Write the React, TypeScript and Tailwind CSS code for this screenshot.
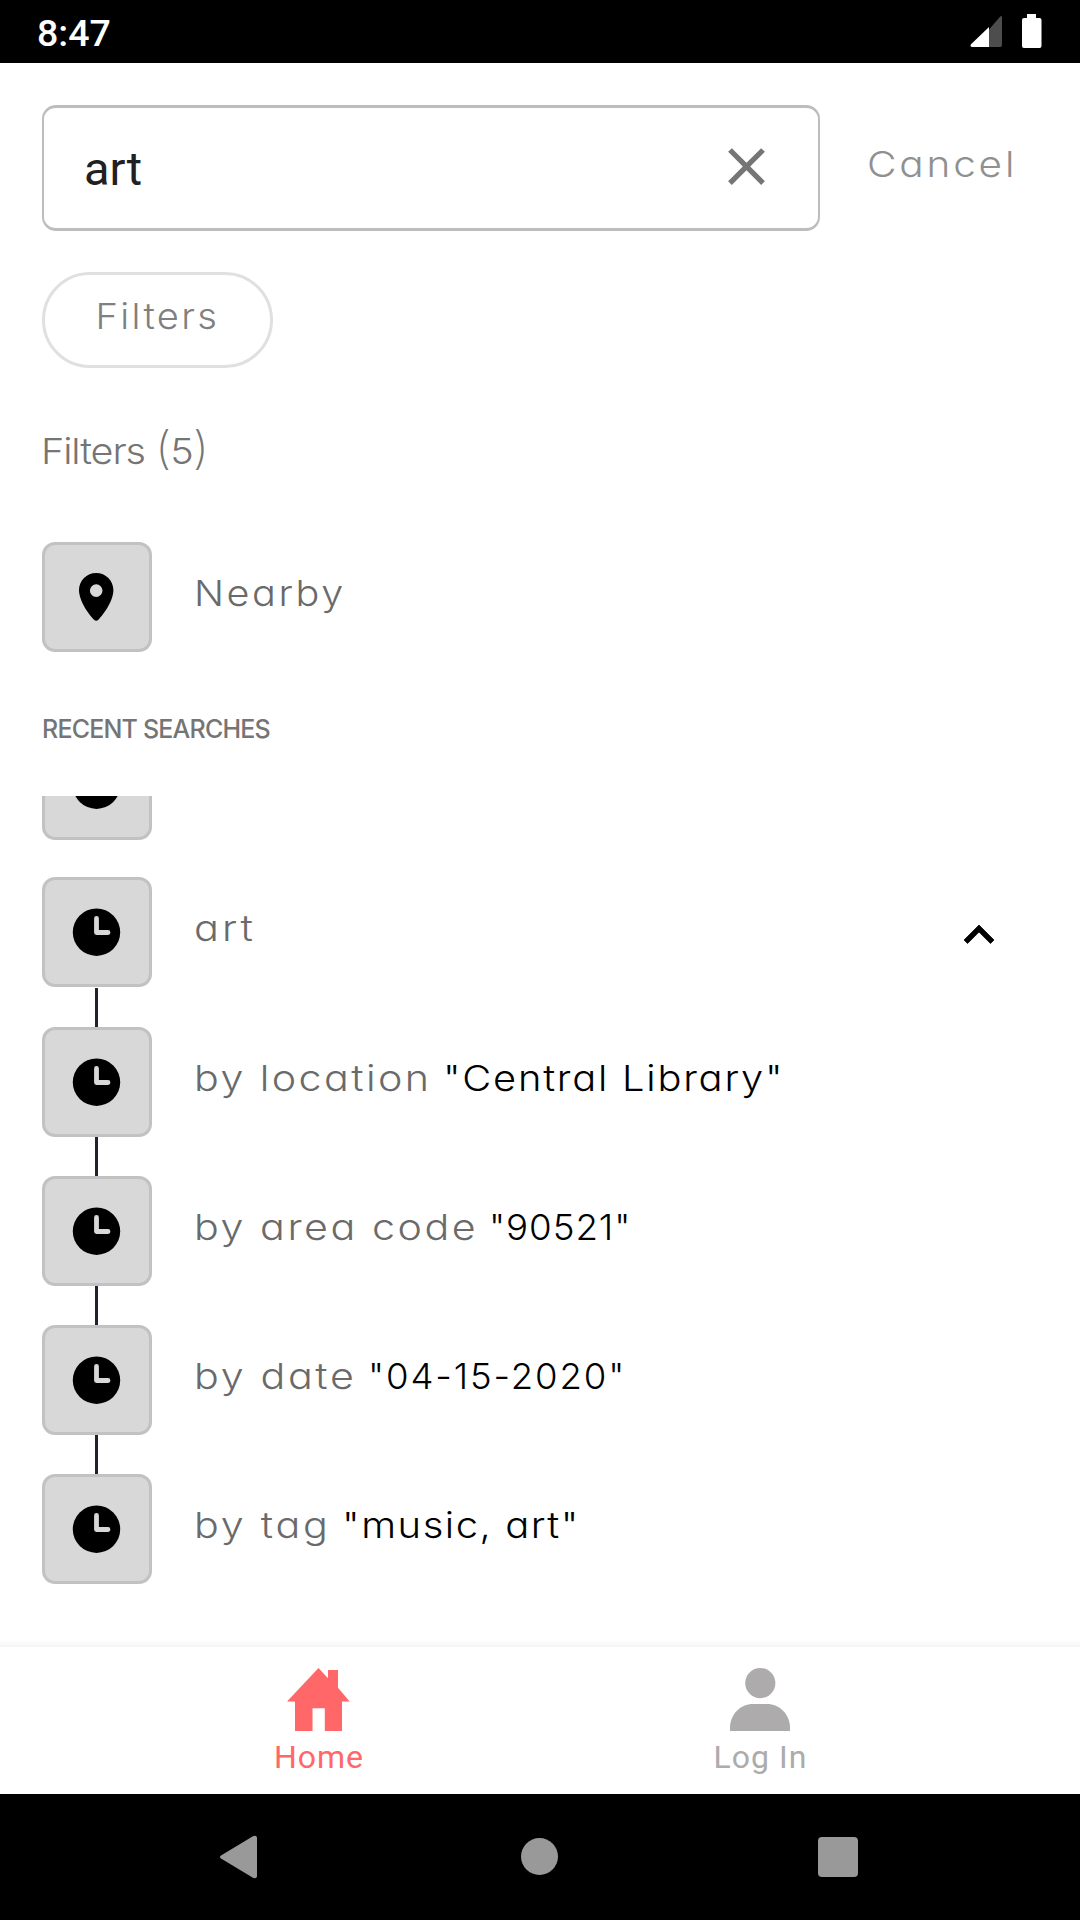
import React from "react";

const light = "inline-block font-['Inter','Lato',sans-serif] font-light [font-feature-settings:'cv11'] text-[36px] leading-[48px] whitespace-pre";

function ClockIcon() {
  return (
    <svg width="104" height="104" viewBox="0 0 104 104" className="block">
      <circle cx="51.5" cy="52.2" r="23.7" fill="#000" />
      <path d="M51.5 38.5V52.5H63" fill="none" stroke="#d8d8d8" strokeWidth="4.8" strokeLinecap="round" strokeLinejoin="round" />
    </svg>
  );
}

function PinIcon() {
  return (
    <svg width="104" height="104" viewBox="0 0 104 104" className="block">
      <path
        fillRule="evenodd"
        d="M51.2 28C41.6 28 34 35.6 34 45.1C34 56.5 44.5 70.2 49 74.8C50.3 76 52.1 76 53.4 74.8C57.9 70.2 68.4 56.5 68.4 45.1C68.4 35.6 60.8 28 51.2 28ZM51.2 39.3A6.3 6.3 0 1 1 51.2 51.9A6.3 6.3 0 1 1 51.2 39.3Z"
        fill="#000"
      />
    </svg>
  );
}

function Tile({ children }: { children: React.ReactNode }) {
  return <div className="size-[110px] shrink-0 rounded-[13px] border-3 border-[#c2c2c2] bg-[#d8d8d8]">{children}</div>;
}

function Connector({ first }: { first?: boolean }) {
  return (
    <div className={first ? "h-10 pt-px pl-[53px]" : "h-[39px] pl-[53px]"}>
      <div className="h-[39px] w-[3px] bg-[#20222c]" />
    </div>
  );
}

const details = [
  { label: "by location", value: '"Central Library"', labelStyle: "w-[249px] tracking-[2.1px]", valueStyle: "scale-x-[1.107] tracking-[1.6px]" },
  { label: "by area code", value: '"90521"', labelStyle: "w-[295px] tracking-[2.2px]", valueStyle: "scale-x-[1.02] tracking-[0.9px]" },
  { label: "by date", value: '"04-15-2020"', labelStyle: "w-[174px] tracking-[2.3px]", valueStyle: "scale-x-[1.015] tracking-[1.85px]" },
  { label: "by tag", value: '"music, art"', labelStyle: "w-[148px] tracking-[2.4px]", valueStyle: "scale-x-[1.11] tracking-[1.4px]" },
];

export default function App() {
  return (
    <div className="flex h-[1920px] w-[1080px] flex-col overflow-hidden bg-white">
      <header className="flex h-[63px] shrink-0 items-center justify-between bg-black pr-[38px] pl-[37px]">
        <span className="pt-[2px] font-['Roboto',sans-serif] text-[37.5px] leading-[44px] font-medium text-white">8:47</span>
        <svg width="72" height="36" viewBox="970 14 72 36">
          <path d="M989 47V29.5L1000 16.7Q1002 15 1002 18V45Q1002 47 1000 47Z" fill="#4d4d4d" />
          <path d="M989 47H972Q969.6 46.4 971 44.3L989 27Z" fill="#fff" />
          <path d="M1027 14H1036V18H1039.5Q1041.5 18 1041.5 20V46Q1041.5 48 1039.5 48H1024Q1022 48 1022 46V20Q1022 18 1024 18H1027Z" fill="#fff" />
        </svg>
      </header>

      <main className="flex min-h-0 flex-1 flex-col px-[42px] pt-[42px]">
        <div className="flex h-[126px] shrink-0 items-center">
          <div className="flex h-[126px] w-[778px] items-center justify-between rounded-[14px] border-x-2 border-y-3 border-[#bdbdbd] pr-[40px] pl-[40px]">
            <span className="pt-[2px] font-['Roboto',sans-serif] text-[47px] leading-[56px] text-[#212121]">art</span>
            <svg width="63" height="63" viewBox="0 0 24 24" fill="#757575" className="mb-[3px]">
              <path d="M19 6.41 17.59 5 12 10.59 6.41 5 5 6.41 10.59 12 5 17.59 6.41 19 12 13.41 17.59 19 19 17.59 13.41 12z" />
            </svg>
          </div>
          <span className={light + " ml-[47px] origin-left scale-x-[1.125] pb-2 tracking-[2.5px] text-[#909090]"}>Cancel</span>
        </div>

        <button className="mt-[41px] h-24 w-[231px] shrink-0 rounded-full border-3 border-[#e0e0e0] pb-2">
          <span className={light + " scale-x-[1.06] tracking-[2.2px] text-[#808080]"}>Filters</span>
        </button>

        <div className="mt-[57px] h-[50px] shrink-0 leading-none">
          <span className={light + " -ml-px origin-left scale-x-[1.1] tracking-[-1px] text-[#757575]"}>
            Filters <span className="text-[45px] leading-none font-extralight">(</span>5<span className="text-[45px] leading-none font-extralight">)</span>
          </span>
        </div>

        <div className="mt-[67px] flex shrink-0 items-center">
          <Tile>
            <PinIcon />
          </Tile>
          <span className={light + " ml-[42px] origin-left scale-x-[1.1] pb-2 tracking-[2.3px] text-[#6a6a6a]"}>Nearby</span>
        </div>

        <h2 className="mt-[59px] shrink-0 font-['Inter',sans-serif] text-[25px] leading-[36px] font-medium tracking-[-0.8px] text-[#757575]">RECENT SEARCHES</h2>

        <div className="mt-[49px] min-h-0 flex-1 overflow-hidden">
          <div className="-mt-[66px] mb-[37px]">
            <Tile>
              <ClockIcon />
            </Tile>
          </div>
          <div className="flex items-center">
            <Tile>
              <ClockIcon />
            </Tile>
            <span className={light + " ml-[42px] origin-left scale-x-[1.15] pb-2 tracking-[2.6px] text-[#6a6a6a]"}>art</span>
            <svg width="60" height="60" viewBox="0 0 24 24" className="mt-[6px] mr-[29px] ml-auto" fill="#000">
              <path d="m12 8-6 6 1.41 1.41L12 10.83l4.59 4.58L18 14z" stroke="#000" strokeWidth="0.3" />
            </svg>
          </div>
          {details.map((d, i) => (
            <div key={d.label}>
              <Connector first={i === 0} />
              <div className="flex items-center">
                <Tile>
                  <ClockIcon />
                </Tile>
                <span className={light + " ml-[42px] origin-left scale-x-[1.145] pb-2 text-[#6a6a6a] " + d.labelStyle}>{d.label}</span>
                <span className={light + " origin-left pb-2 text-black " + d.valueStyle}>{d.value}</span>
              </div>
            </div>
          ))}
        </div>
      </main>

      <div className="-mt-2 h-2 shrink-0 bg-linear-to-b from-transparent to-[#f5f5f5]" />
      <nav className="flex h-[147px] shrink-0 justify-center bg-white font-['Roboto',sans-serif] text-[32px] leading-[36px] tracking-[1px]">
        <div className="flex w-[441px] flex-col items-center pt-[21px] pr-px text-[#ff6769]">
          <svg width="63" height="63" viewBox="1 0 63 63" fill="currentColor" className="overflow-visible">
            <path d="M31.5 0L41 10.3V2H51V19.7L62.7 33.6H55V63H37.8V40.3H25.5V63H8V33.6H0Z" />
          </svg>
          <span className="mt-2">Home</span>
        </div>
        <div className="flex w-[441px] flex-col items-center pt-[21px] text-[#adabac]">
          <svg width="63" height="63" viewBox="0.5 0 63 63" fill="currentColor">
            <circle cx="31.8" cy="15.1" r="15.1" />
            <path d="M1.5 63V59C2 46 12 36 24.5 36H38.5C51 36 61 46 61.5 59V63Z" />
          </svg>
          <span className="mt-2">Log In</span>
        </div>
      </nav>

      <footer className="flex h-[126px] shrink-0 items-center justify-between bg-black pr-[222px] pl-[220px]">
        <svg width="38" height="44" viewBox="0 0 38 44" fill="#999">
          <path d="M1 20.5L32.5 1.4C34.5 .3 37 .6 37 3V41C37 43.4 34.5 43.7 32.5 42.6L1 23.6Q-1 22 1 20.5Z" />
        </svg>
        <div className="mb-px ml-[2px] size-[37px] rounded-full bg-[#999]" />
        <div className="size-10 rounded-[4px] bg-[#999]" />
      </footer>
    </div>
  );
}
